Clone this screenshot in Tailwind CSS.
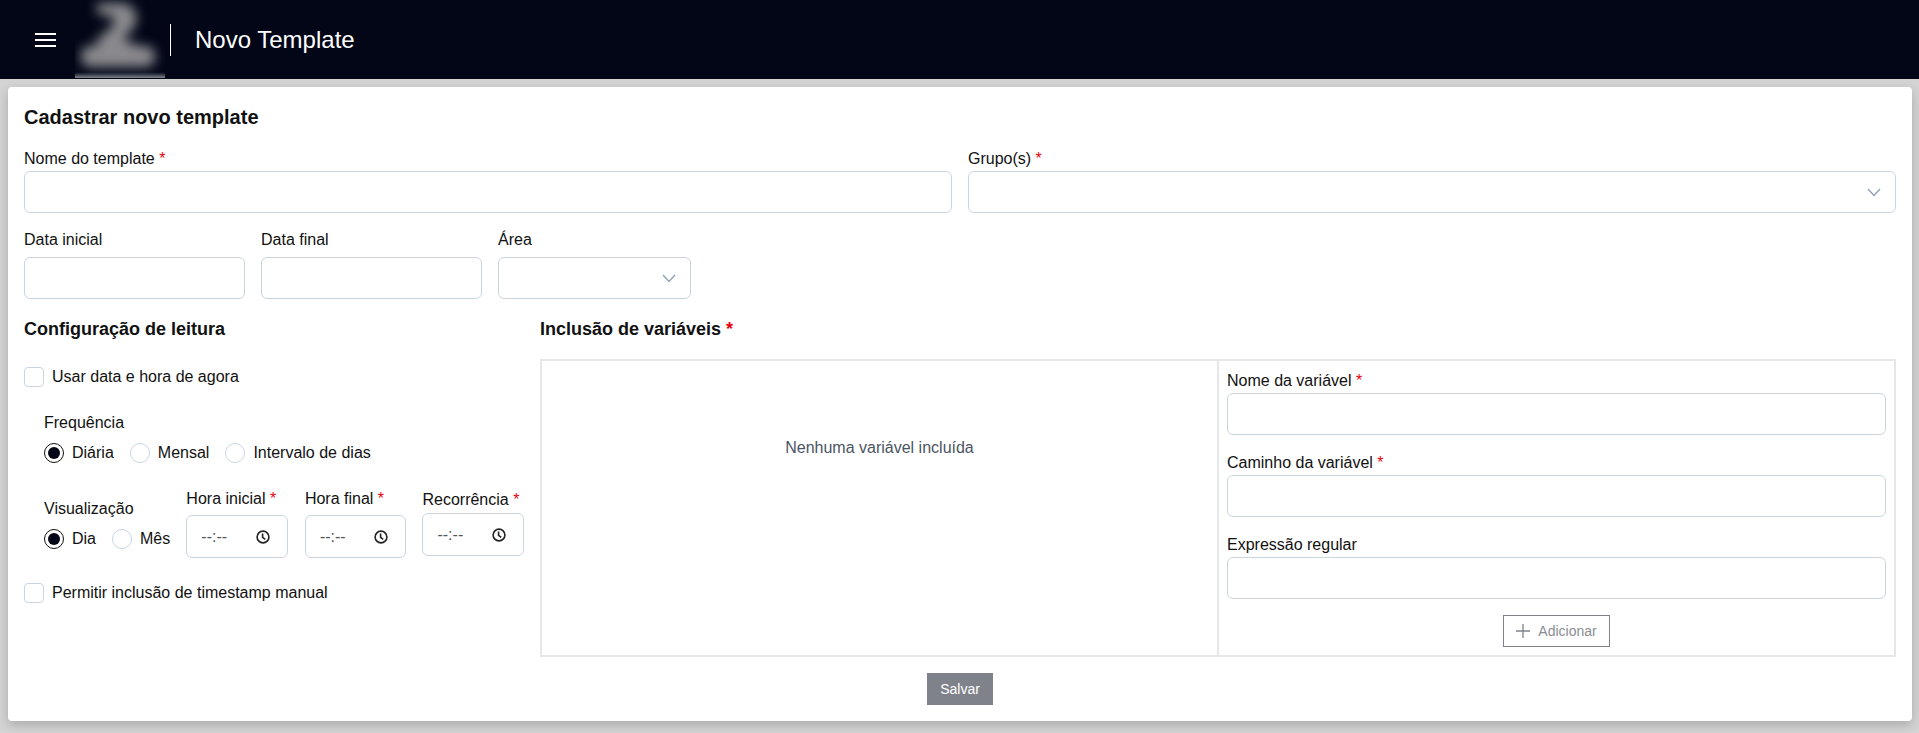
<!doctype html>
<html lang="pt-BR">
<head>
<meta charset="utf-8">
<title>Novo Template</title>
<script src="https://cdn.jsdelivr.net/npm/@tailwindcss/browser@4"></script>
</head>
<body class="h-[733px] overflow-hidden bg-[#d4d4d4] font-['Liberation_Sans',Arial,sans-serif] text-[16px] text-[#111]">
  <header class="h-[79px] bg-[#020617] flex items-center text-white overflow-hidden">
    <button class="ml-[35px] w-[21px] flex flex-col gap-[4px]">
      <span class="block h-[2px] bg-white"></span>
      <span class="block h-[2px] bg-white"></span>
      <span class="block h-[2px] bg-white"></span>
    </button>
    <div class="ml-[19px] w-[90px] h-[78px] self-start overflow-hidden">
      <svg class="w-[90px] h-[72px] blur-[6px]" viewBox="0 0 90 72" fill="#8a8a8e">
        <path d="M22 3h30l10 10-2 14-12 12 18 8H26l-6-6 12-10 8-8-4-7-14-2z"/>
        <rect x="6" y="46" width="74" height="21" rx="9"/>
      </svg>
      <div class="h-[6px] bg-linear-to-b from-[#020617] to-[#85868b]"></div>
    </div>
    <span class="ml-[5px] w-px h-[32px] bg-white"></span>
    <h1 class="ml-[24px] text-[24px] leading-none">Novo Template</h1>
  </header>

  <main class="pl-2 pr-[7px] pt-2">
    <form class="h-[634px] bg-white rounded-[4px] shadow-[0_4px_12px_rgba(0,0,0,0.2)] px-4 pt-[19px]">
      <h2 class="text-[20px] leading-[22px] font-bold">Cadastrar novo template</h2>

      <div class="mt-[22px] grid grid-cols-2 gap-4">
        <div>
          <label class="block h-[21px] leading-[17px]">Nome do template <span class="text-red-600 align-top">*</span></label>
          <input type="text" class="block w-full h-[42px] border border-[#cbd5e1] rounded-[6px]">
        </div>
        <div>
          <label class="block h-[21px] leading-[17px]">Grupo(s) <span class="text-red-600 align-top">*</span></label>
          <div class="h-[42px] border border-[#cbd5e1] rounded-[6px] flex items-center justify-end pr-[14px]">
            <svg class="w-[14px] h-[9px] text-[#94a3b8]" viewBox="0 0 14 9" fill="none" stroke="currentColor" stroke-width="1.5"><path d="M1 1l6 6.5L13 1"/></svg>
          </div>
        </div>
      </div>

      <div class="mt-[17px] flex gap-4">
        <div class="w-[221px]">
          <label class="block h-[27px] leading-[20px]">Data inicial</label>
          <input type="text" class="block w-full h-[42px] border border-[#cbd5e1] rounded-[6px]">
        </div>
        <div class="w-[221px]">
          <label class="block h-[27px] leading-[20px]">Data final</label>
          <input type="text" class="block w-full h-[42px] border border-[#cbd5e1] rounded-[6px]">
        </div>
        <div class="w-[193px]">
          <label class="block h-[27px] leading-[20px]">Área</label>
          <div class="h-[42px] border border-[#cbd5e1] rounded-[6px] flex items-center justify-end pr-[14px]">
            <svg class="w-[14px] h-[9px] text-[#94a3b8]" viewBox="0 0 14 9" fill="none" stroke="currentColor" stroke-width="1.5"><path d="M1 1l6 6.5L13 1"/></svg>
          </div>
        </div>
      </div>

      <div class="mt-[20px] flex gap-4">
        <section class="w-[500px] shrink-0">
          <h3 class="text-[18px] font-bold leading-[20px]">Configuração de leitura</h3>

          <label class="mt-[28px] flex items-center gap-[8px] h-[20px]">
            <span class="w-[20px] h-[20px] border border-[#cbd5e1] rounded-[4px]"></span>
            Usar data e hora de agora
          </label>

          <div class="mt-[26px] ml-[20px]">
            <p class="leading-[20px]">Frequência</p>
            <div class="mt-[10px] flex items-center h-[20px]">
              <span class="w-[20px] h-[20px] rounded-full border-[1.5px] border-[#111] flex items-center justify-center"><span class="w-[12px] h-[12px] rounded-full bg-[#020617]"></span></span>
              <span class="ml-[8px]">Diária</span>
              <span class="ml-[16px] w-[20px] h-[20px] rounded-full border border-[#cbd5e1]"></span>
              <span class="ml-[8px]">Mensal</span>
              <span class="ml-[16px] w-[20px] h-[20px] rounded-full border border-[#cbd5e1]"></span>
              <span class="ml-[8px]">Intervalo de dias</span>
            </div>

            <div class="mt-[26px] flex items-start">
              <div class="w-[143px] pt-[10px]">
                <p class="leading-[20px]">Visualização</p>
                <div class="mt-[10px] flex items-center h-[20px]">
                  <span class="w-[20px] h-[20px] rounded-full border-[1.5px] border-[#111] flex items-center justify-center"><span class="w-[12px] h-[12px] rounded-full bg-[#020617]"></span></span>
                  <span class="ml-[8px]">Dia</span>
                  <span class="ml-[16px] w-[20px] h-[20px] rounded-full border border-[#cbd5e1]"></span>
                  <span class="ml-[8px]">Mês</span>
                </div>
              </div>
              <div class="w-[102px]">
                <label class="block h-[26px] leading-[20px] whitespace-nowrap">Hora inicial <span class="text-red-600 align-top">*</span></label>
                <div class="h-[43px] border border-[#cbd5e1] rounded-[6px] flex items-center justify-between pl-[14px] pr-[17px] text-[#555]">
                  <span>--:--</span>
                  <svg class="w-[14px] h-[14px]" viewBox="0 0 14 14" fill="none" stroke="#222" stroke-width="1.6"><circle cx="7" cy="7" r="5.9"/><path d="M6.6 3.4v4l2.6 2"/></svg>
                </div>
              </div>
              <div class="ml-[17px] w-[102px]">
                <label class="block h-[26px] leading-[20px] whitespace-nowrap">Hora final <span class="text-red-600 align-top">*</span></label>
                <div class="h-[43px] border border-[#cbd5e1] rounded-[6px] flex items-center justify-between pl-[14px] pr-[17px] text-[#555]">
                  <span>--:--</span>
                  <svg class="w-[14px] h-[14px]" viewBox="0 0 14 14" fill="none" stroke="#222" stroke-width="1.6"><circle cx="7" cy="7" r="5.9"/><path d="M6.6 3.4v4l2.6 2"/></svg>
                </div>
              </div>
              <div class="ml-[16px] w-[102px]">
                <label class="block h-[23px] mt-[1px] leading-[20px] whitespace-nowrap">Recorrência <span class="text-red-600 align-top">*</span></label>
                <div class="h-[43px] border border-[#cbd5e1] rounded-[6px] flex items-center justify-between pl-[14px] pr-[17px] text-[#555]">
                  <span>--:--</span>
                  <svg class="w-[14px] h-[14px]" viewBox="0 0 14 14" fill="none" stroke="#222" stroke-width="1.6"><circle cx="7" cy="7" r="5.9"/><path d="M6.6 3.4v4l2.6 2"/></svg>
                </div>
              </div>
            </div>
          </div>

          <label class="mt-[25px] flex items-center gap-[8px] h-[20px]">
            <span class="w-[20px] h-[20px] border border-[#cbd5e1] rounded-[4px]"></span>
            Permitir inclusão de timestamp manual
          </label>
        </section>

        <section class="flex-1 min-w-0">
          <h3 class="text-[18px] font-bold leading-[20px]">Inclusão de variáveis <span class="text-red-600">*</span></h3>
          <div class="mt-[20px] h-[298px] grid grid-cols-[677px_1fr] border-2 border-[#e5e7eb]">
            <div class="border-r-2 border-[#e5e7eb] flex justify-center pt-[75px] text-[#4b5563]">Nenhuma variável incluída</div>
            <div class="pl-[8px] pr-[8px] pt-[11px]">
              <label class="block h-[21px] leading-[17px]">Nome da variável <span class="text-red-600 align-top">*</span></label>
              <input type="text" class="block w-full h-[42px] border border-[#cbd5e1] rounded-[6px]">
              <label class="mt-[19px] block h-[21px] leading-[17px]">Caminho da variável <span class="text-red-600 align-top">*</span></label>
              <input type="text" class="block w-full h-[42px] border border-[#cbd5e1] rounded-[6px]">
              <label class="mt-[19px] block h-[21px] leading-[17px]">Expressão regular</label>
              <input type="text" class="block w-full h-[42px] border border-[#cbd5e1] rounded-[6px]">
              <div class="mt-[16px] flex justify-center">
                <button type="button" class="w-[107px] h-[32px] border border-[#7f828b] flex items-center justify-center gap-[8px] text-[14px] text-[#8a8d95]">
                  <svg class="w-[14px] h-[14px]" viewBox="0 0 14 14" fill="none" stroke="#7f828b" stroke-width="1.3"><path d="M7 0v14M0 7h14"/></svg>
                  Adicionar
                </button>
              </div>
            </div>
          </div>
        </section>
      </div>

      <div class="mt-[16px] flex justify-center">
        <button type="submit" class="w-[66px] h-[32px] bg-[#7f828b] text-white text-[14px]">Salvar</button>
      </div>
    </form>
  </main>
</body>
</html>
